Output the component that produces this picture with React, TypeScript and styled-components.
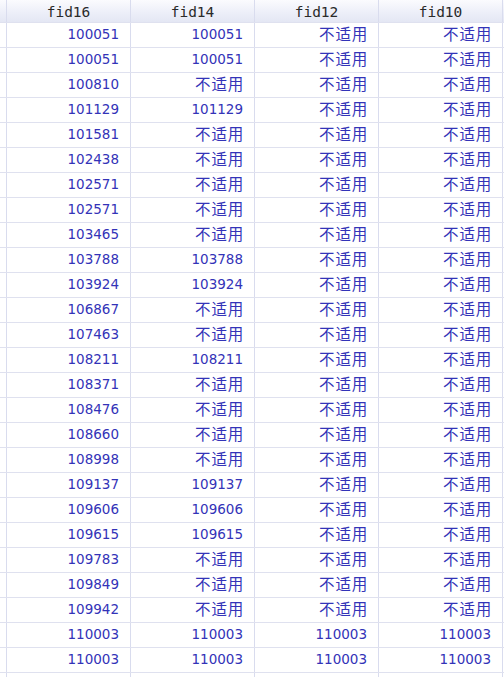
import React from "react";
import styled, { createGlobalStyle } from "styled-components";

const Global = createGlobalStyle`
  html, body { margin: 0; padding: 0; background: #ffffff; overflow: hidden; }
  body { font-family: "DejaVu Sans", Verdana, sans-serif; }
`;

const Table = styled.div`
  display: flex;
  flex-direction: column;
  width: 504px;
  height: 677px;
  overflow: hidden;
`;

const Row = styled.div<{ $head?: boolean }>`
  display: grid;
  grid-template-columns: 7px repeat(4, 124px) 1fr;
  height: ${(p) => (p.$head ? 22 : 24)}px;
  flex: none;
  border-bottom: 1px solid #dfe1ef;
  background: ${(p) =>
    p.$head ? "linear-gradient(to bottom, #fbfbfe 0%, #eceef8 60%, #e4e7f4 100%)" : "#ffffff"};
`;

const Stub = styled.div`
  border-right: 1px solid #d9dcee;
`;

const HeadCell = styled.div`
  border-right: 1px solid #d9dcee;
  display: flex;
  align-items: center;
  justify-content: center;
  font-family: "DejaVu Sans Mono", "Liberation Mono", monospace;
  font-size: 14.5px;
  color: #2a2a2a;
  padding-top: 1px;
`;

const Cell = styled.div`
  border-right: 1px solid #d9dcee;
  display: flex;
  align-items: center;
  justify-content: flex-end;
  padding-right: 11px;
  font-family: "DejaVu Sans", Verdana, sans-serif;
  font-size: 13.5px;
  color: #3333b8;
  line-height: 1;
`;

const NA = styled.span`
  display: block;
  font-family: "Noto Sans CJK SC", sans-serif;
  font-size: 15.5px;
  line-height: 1;
  letter-spacing: 0.8px;
  margin-right: -1px;
  margin-top: -2px;
`;

const cols = ["fid16", "fid14", "fid12", "fid10"];
const n = null;
const data: (string | null)[][] = [
  ["100051", "100051", n, n],
  ["100051", "100051", n, n],
  ["100810", n, n, n],
  ["101129", "101129", n, n],
  ["101581", n, n, n],
  ["102438", n, n, n],
  ["102571", n, n, n],
  ["102571", n, n, n],
  ["103465", n, n, n],
  ["103788", "103788", n, n],
  ["103924", "103924", n, n],
  ["106867", n, n, n],
  ["107463", n, n, n],
  ["108211", "108211", n, n],
  ["108371", n, n, n],
  ["108476", n, n, n],
  ["108660", n, n, n],
  ["108998", n, n, n],
  ["109137", "109137", n, n],
  ["109606", "109606", n, n],
  ["109615", "109615", n, n],
  ["109783", n, n, n],
  ["109849", n, n, n],
  ["109942", n, n, n],
  ["110003", "110003", "110003", "110003"],
  ["110003", "110003", "110003", "110003"],
];

export default function App() {
  return (
    <>
      <Global />
      <Table>
        <Row $head>
          <Stub />
          {cols.map((c) => (
            <HeadCell key={c}>{c}</HeadCell>
          ))}
          <div />
        </Row>
        {data.map((r, i) => (
          <Row key={i}>
            <Stub />
            {r.map((v, j) => (
              <Cell key={j}>{v === null ? <NA>不适用</NA> : v}</Cell>
            ))}
            <div />
          </Row>
        ))}
        <Row>
          <Stub />
          <Cell />
          <Cell />
          <Cell />
          <Cell />
          <div />
        </Row>
      </Table>
    </>
  );
}
